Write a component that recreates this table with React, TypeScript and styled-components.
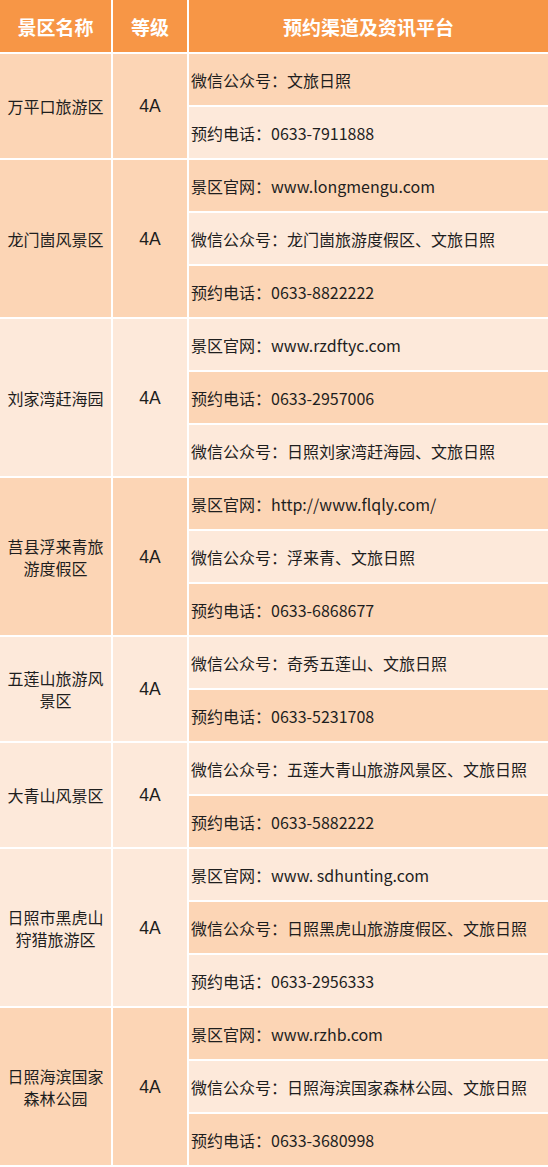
import styled, { createGlobalStyle } from "styled-components";

const GlobalStyle = createGlobalStyle`
  html, body {
    margin: 0;
    padding: 0;
    background: #ffffff;
  }
  body {
    font-family: "Noto Sans CJK SC", "Noto Sans", sans-serif;
  }
`;

const DARK = "#fcd5b5";
const LIGHT = "#fde9da";

type Group = {
  name: string;
  level: string;
  shade: "dark" | "light";
  items: string[];
};

const groups: Group[] = [
  {
    name: "万平口旅游区",
    level: "4A",
    shade: "dark",
    items: ["微信公众号：文旅日照", "预约电话：0633-7911888"],
  },
  {
    name: "龙门崮风景区",
    level: "4A",
    shade: "dark",
    items: [
      "景区官网：www.longmengu.com",
      "微信公众号：龙门崮旅游度假区、文旅日照",
      "预约电话：0633-8822222",
    ],
  },
  {
    name: "刘家湾赶海园",
    level: "4A",
    shade: "light",
    items: [
      "景区官网：www.rzdftyc.com",
      "预约电话：0633-2957006",
      "微信公众号：日照刘家湾赶海园、文旅日照",
    ],
  },
  {
    name: "莒县浮来青旅游度假区",
    level: "4A",
    shade: "dark",
    items: [
      "景区官网：http://www.flqly.com/",
      "微信公众号：浮来青、文旅日照",
      "预约电话：0633-6868677",
    ],
  },
  {
    name: "五莲山旅游风景区",
    level: "4A",
    shade: "light",
    items: ["微信公众号：奇秀五莲山、文旅日照", "预约电话：0633-5231708"],
  },
  {
    name: "大青山风景区",
    level: "4A",
    shade: "light",
    items: [
      "微信公众号：五莲大青山旅游风景区、文旅日照",
      "预约电话：0633-5882222",
    ],
  },
  {
    name: "日照市黑虎山狩猎旅游区",
    level: "4A",
    shade: "light",
    items: [
      "景区官网：www. sdhunting.com",
      "微信公众号：日照黑虎山旅游度假区、文旅日照",
      "预约电话：0633-2956333",
    ],
  },
  {
    name: "日照海滨国家森林公园",
    level: "4A",
    shade: "dark",
    items: [
      "景区官网：www.rzhb.com",
      "微信公众号：日照海滨国家森林公园、文旅日照",
      "预约电话：0633-3680998",
    ],
  },
];

const Table = styled.div`
  display: grid;
  grid-template-columns: 111px 74px 1fr;
  gap: 2px;
  width: 548px;
  padding-bottom: 2px;
  background: #ffffff;
`;

const HeadCell = styled.div`
  height: 52px;
  display: flex;
  align-items: center;
  justify-content: center;
  background: #f79646;
  color: #ffffff;
  font-size: 19px;
  font-weight: 700;
`;

const SideCell = styled.div<{ $shade: "dark" | "light" }>`
  display: flex;
  align-items: center;
  justify-content: center;
  padding: 0 6px;
  text-align: center;
  background: ${(p) => (p.$shade === "dark" ? DARK : LIGHT)};
  color: #1e1e1e;
  font-size: 16px;
  line-height: 22px;
`;

const LevelCell = styled(SideCell)`
  font-family: "Liberation Sans", Arial, sans-serif;
  font-size: 17.5px;
`;

const ItemList = styled.div`
  display: grid;
  grid-auto-rows: 51px;
  gap: 2px;
`;

const Item = styled.div<{ $dark: boolean }>`
  display: flex;
  align-items: center;
  padding-left: 2px;
  background: ${(p) => (p.$dark ? DARK : LIGHT)};
  color: #1e1e1e;
  font-size: 16px;
  white-space: nowrap;
  overflow: hidden;
`;

export default function App() {
  let counter = 0;
  return (
    <>
      <GlobalStyle />
      <Table>
        <HeadCell>景区名称</HeadCell>
        <HeadCell>等级</HeadCell>
        <HeadCell>预约渠道及资讯平台</HeadCell>
        {groups.map((g) => (
          <>
            <SideCell key={g.name + "-n"} $shade={g.shade}>
              {g.name}
            </SideCell>
            <LevelCell key={g.name + "-l"} $shade={g.shade}>
              {g.level}
            </LevelCell>
            <ItemList key={g.name + "-i"}>
              {g.items.map((text) => {
                const dark = counter % 2 === 0;
                counter += 1;
                return (
                  <Item key={text} $dark={dark}>
                    {text}
                  </Item>
                );
              })}
            </ItemList>
          </>
        ))}
      </Table>
    </>
  );
}
